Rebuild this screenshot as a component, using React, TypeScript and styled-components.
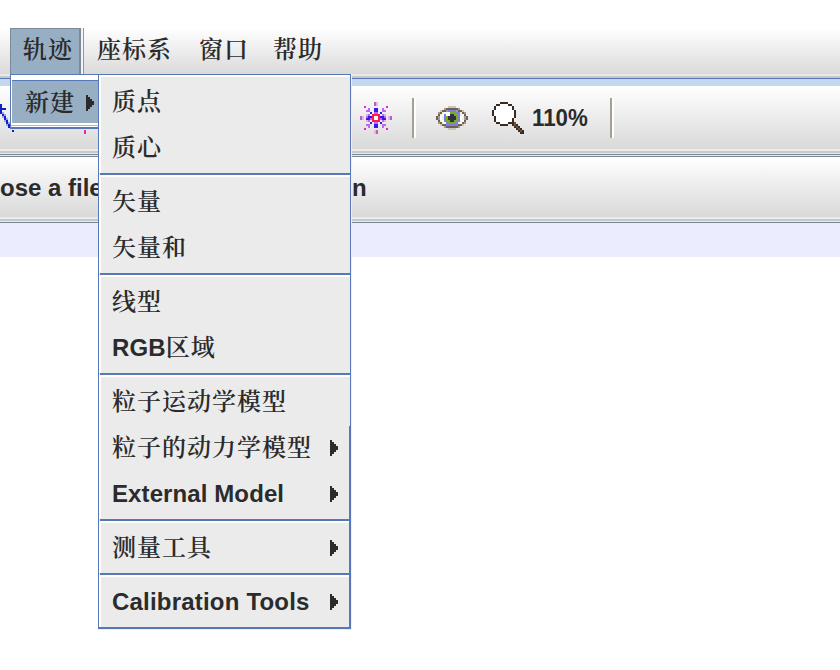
import React from "react";
import styled, { createGlobalStyle } from "styled-components";

const BLUE = "#5678b8";

const GlobalStyle = createGlobalStyle`
  * { box-sizing: border-box; }
  body { margin: 0; background: #fff; }
`;

const Window = styled.main`
  position: relative;
  width: 840px;
  height: 670px;
  overflow: hidden;
  background: #fff;
  color: #2b2b2b;
  font: 700 24px/30px "Liberation Sans", "Noto Serif CJK SC", "Noto Sans CJK SC", sans-serif;
  white-space: nowrap;
`;

const MenuBar = styled.nav`
  display: flex;
  height: 74px;
  padding: 28px 0 0 10px;
  background: linear-gradient(#fff 28px, #dadada 74px);
`;

const MenuTitle = styled.div<{ $width: number; $open?: boolean }>`
  width: ${(p) => p.$width}px;
  height: 46px;
  padding: 7px 0 0 ${(p) => (p.$open ? 12 : 0)}px;
  ${(p) =>
    p.$open &&
    `background: #98afc3;
     border: solid #7a8a99;
     border-width: 1px 2px 0 1px;
     padding-top: 6px;
     margin-right: 16px;
     box-shadow: 2px 0 #f4f4f4, 3px 0 #8d99a5;`}
`;

const Chinese = styled.span`
  font-weight: 600;
  letter-spacing: 1px;
`;

const Rule = styled.div<{ $h: number; $color: string }>`
  height: ${(p) => p.$h}px;
  background: ${(p) => p.$color};
`;

const Toolbar = styled.div`
  display: flex;
  height: 63px;
  background: linear-gradient(#fff, #d9d9d9);
`;

const IconSlot = styled.div<{ $width: number; $top?: number }>`
  width: ${(p) => p.$width}px;
  padding-top: ${(p) => p.$top ?? 16}px;
  flex: none;
  svg { display: block; }
`;

const Divider = styled.div<{ $gap: number }>`
  width: 4px;
  height: 40px;
  margin: 12px ${(p) => p.$gap}px 0 0;
  border-left: 2px solid #a5a08f;
  border-right: 2px solid #fff;
`;

const ZoomLevel = styled.div`
  width: 78px;
  padding-top: 17px;
  transform: scaleX(0.93);
  transform-origin: left;
`;

const StatusBar = styled.div`
  display: flex;
  height: 60px;
  padding-top: 16px;
  background: linear-gradient(#fff, #d9d9d9);
`;

const StatusPart = styled.span<{ $width: number }>`
  width: ${(p) => p.$width}px;
`;

const Submenu = styled.div`
  position: absolute;
  left: 10px;
  top: 74px;
  width: 90px;
  height: 55px;
  padding-top: 3px;
  background: #fff;
  border: solid ${BLUE};
  border-width: 1px 0 2px 1px;
  box-shadow: inset 0 -1px #fff, inset 0 -2px #aeb8c4;
`;

const SubmenuItem = styled.div`
  display: flex;
  align-items: center;
  height: 43px;
  margin: 2px 0 0 1px;
  padding: 2px 0 0 13px;
  background: #98afc3;
  border-top: 1px solid ${BLUE};
`;

const SubmenuArrow = styled.span`
  margin-left: 11px;
  display: flex;
`;

const Popup = styled.div`
  position: absolute;
  left: 98px;
  top: 74px;
  width: 253px;
  height: 555px;
  background: #ebebeb;
  border: solid ${BLUE};
  border-width: 1px 1px 2px 1px;
  box-shadow: 1px 0 #f0f0f0, 0 1px #eee;

  &::after {
    content: "";
    position: absolute;
    right: 0;
    top: 351px;
    bottom: 0;
    width: 1px;
    background: ${BLUE};
  }
`;

const MenuGroup = styled.section`
  padding: 2px 0;
  border-top: 2px solid #fff;
  border-left: 2px solid #fff;
`;

const GroupLine = styled.div`
  height: 2px;
  margin-left: 1px;
  background: ${BLUE};
`;

const MenuItem = styled.div`
  display: flex;
  align-items: center;
  justify-content: space-between;
  height: 46px;
  padding: 0 12px 0 11px;
`;

const Label = styled.span<{ $spacing?: number }>`
  letter-spacing: ${(p) => p.$spacing ?? 0}px;
`;

const palette: Record<string, string> = {
  m: "#c05fbb", p: "#dfb5e7", v: "#bd68f1", b: "#3618e8", r: "#ff1749",
  w: "#ffffff", k: "#ef20bd", n: "#705f59", t: "#cdc5b5", c: "#f0f0d6",
  u: "#7b80dd", g: "#79aa2c", d: "#30333b", h: "#392b22", o: "#765431",
  a: "#101fca", l: "#9da5ef", q: "#a39a90",
};

function PixelIcon({ rows }: { rows: string[] }) {
  return (
    <svg width={rows[0].length * 2} height={rows.length * 2} viewBox={`0 0 ${rows[0].length} ${rows.length}`} shapeRendering="crispEdges">
      {rows.flatMap((row, y) =>
        [...row].map((c, x) => c === "." ? null : <rect key={`${x}-${y}`} x={x} y={y} width="1" height="1" fill={palette[c]} />)
      )}
    </svg>
  );
}

const star = [
  ".......mp.......",
  ".......mp.......",
  "..k..........k..",
  "....v..bb..v....",
  "...vv..bb..vv...",
  ".....b.vv.b.....",
  "...pv.rrrr.vp...",
  "mp.vbbrwwrbbv.pm",
  "mp.bbvrwwrvbb.pm",
  "...pv.rrrr.vp...",
  ".....b.vv.b.....",
  "...vv..bb..vv...",
  "....v..bb..v....",
  "..k..........k..",
  ".......pm.......",
  ".......pm.......",
];

const eye = [
  "......tttt......",
  "....qnnnnnnq....",
  "..tnnquuuuqnnt..",
  ".qncwwwggguucnq.",
  ".ncwuwwddggucwn.",
  "nqwcugddddguwcqn",
  "nqwcugddddguwcqn",
  ".ncwuggddggucwn.",
  ".qncwuggggucwnq.",
  "..tnnuuuuuunnt..",
  "....qnnnnnnq....",
  "......tttt......",
];

const lens = [
  "....hhhh........",
  "..hhwwwwhh......",
  ".hwwwwwwwwh.....",
  ".hwwwwwwwwh.....",
  "hwwwwwwwwwwh....",
  "hwwwwwwwwwwh....",
  "hwwwwwwwwwwh....",
  ".hwwwwwwwwwh....",
  ".hwwwwwwwwh.....",
  ".hwwwwwwwwh.....",
  "..hhwwwwhhho....",
  "....hhhh..hoh...",
  "...........hoh..",
  "............hoh.",
  ".............hoh",
  "..............hh",
];

const track = [
  "a......", "a......", "aaa....", "a......", "al.....",
  ".al....", ".la....", "..al...", "..la...", "...al..",
  "...la..", "....a..", ".......", "......a",
];

const Arrow = () => (
  <svg width="8" height="16" viewBox="0 0 8 16" shapeRendering="crispEdges">
    <path d="M0 0h2v2h2v2h2v2h2v4h-2v2h-2v2h-2v2h-2z" fill="#2b2b2b" />
  </svg>
);

type Entry = { cn?: string; en?: string; arrow?: boolean; spacing?: number };
const groups: Entry[][] = [
  [{ cn: "质点" }, { cn: "质心" }],
  [{ cn: "矢量" }, { cn: "矢量和" }],
  [{ cn: "线型" }, { en: "RGB", cn: "区域", spacing: 0.15 }],
  [{ cn: "粒子运动学模型" }, { cn: "粒子的动力学模型", arrow: true }, { en: "External Model", arrow: true, spacing: 0.1 }],
  [{ cn: "测量工具", arrow: true }],
  [{ en: "Calibration Tools", arrow: true, spacing: 0.2 }],
];

export default function App() {
  return (
    <Window>
      <GlobalStyle />
      <MenuBar>
        <MenuTitle $width={71} $open><Chinese>轨迹</Chinese></MenuTitle>
        <MenuTitle $width={102}><Chinese>座标系</Chinese></MenuTitle>
        <MenuTitle $width={74}><Chinese>窗口</Chinese></MenuTitle>
        <MenuTitle $width={60}><Chinese>帮助</Chinese></MenuTitle>
      </MenuBar>
      <Rule $h={2} $color="#e9e9e9" />
      <Rule $h={2} $color="#c8c8c8" />
      <Rule $h={1} $color={BLUE} />
      <Rule $h={7} $color="#c1d8ef" />
      <Toolbar>
        <IconSlot $width={84} $top={18}><PixelIcon rows={track} /></IconSlot>
        <IconSlot $width={276} $top={44}><PixelIcon rows={["k", "k"]} /></IconSlot>
        <IconSlot $width={52}><PixelIcon rows={star} /></IconSlot>
        <Divider $gap={20} />
        <IconSlot $width={56} $top={20}><PixelIcon rows={eye} /></IconSlot>
        <IconSlot $width={40}><PixelIcon rows={lens} /></IconSlot>
        <ZoomLevel>110%</ZoomLevel>
        <Divider $gap={0} />
      </Toolbar>
      <Rule $h={2} $color="#ececec" />
      <Rule $h={2} $color="#c8c8c8" />
      <Rule $h={1} $color="#e4eaf0" />
      <Rule $h={1} $color="#758695" />
      <Rule $h={1} $color="#e4eef4" />
      <Rule $h={1} $color="#758695" />
      <StatusBar>
        <StatusPart $width={352}>ose a file</StatusPart>
        <StatusPart $width={40}>n</StatusPart>
      </StatusBar>
      <Rule $h={2} $color="#ececec" />
      <Rule $h={2} $color="#c8c8c8" />
      <Rule $h={1} $color="#e4eaf0" />
      <Rule $h={1} $color="#758695" />
      <Rule $h={34} $color="#ebedff" />
      <Submenu>
        <SubmenuItem><Chinese>新建</Chinese><SubmenuArrow><Arrow /></SubmenuArrow></SubmenuItem>
      </Submenu>
      <Popup>
        {groups.map((group, i) => (
          <React.Fragment key={i}>
            {i > 0 && <GroupLine />}
            <MenuGroup>
              {group.map((item) => (
                <MenuItem key={item.cn ?? item.en}>
                  <Label $spacing={item.spacing}>{item.en}{item.cn && <Chinese>{item.cn}</Chinese>}</Label>
                  {item.arrow && <Arrow />}
                </MenuItem>
              ))}
            </MenuGroup>
          </React.Fragment>
        ))}
      </Popup>
    </Window>
  );
}
